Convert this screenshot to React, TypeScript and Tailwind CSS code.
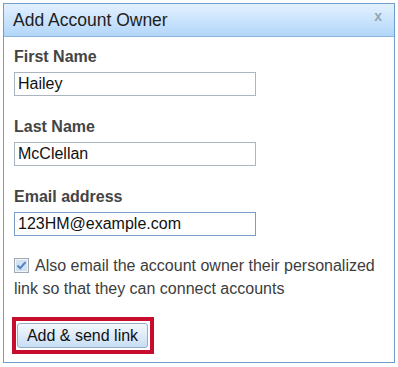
const font = { fontFamily: '"Liberation Sans", Arial, sans-serif' };

const Field = ({
	label,
	value,
	focused,
	first,
}: {
	label: string;
	value: string;
	focused?: boolean;
	first?: boolean;
}) => (
	<div className={first ? "" : "mt-[22px]"}>
		<p className="text-[16px] leading-[18px] font-bold text-[#444]">{label}</p>
		<div
			className={`mt-[6px] w-[242px] h-[24px] bg-white border flex items-center px-[3px] text-[16px] text-[#111] ${
				focused ? "border-[#7b9dc4]" : "border-[#abb5c2]"
			}`}
		>
			{value}
		</div>
	</div>
);

const CheckIcon = () => (
	<svg width="15" height="15" viewBox="0 0 15 15" className="inline-block align-[-2px] mr-[6px]">
		<rect x="0.5" y="0.5" width="14" height="14" fill="#f2f4f7" stroke="#a0a8b2" />
		<rect x="2" y="2" width="11" height="11" fill="#d3e2f2" />
		<path d="M3.5 7.5 L6.2 10.2 L11.5 4.2" fill="none" stroke="#4f86c0" strokeWidth="2" />
	</svg>
);

export default function App() {
	return (
		<div className="w-[398px] h-[367px] bg-white pt-[3px] pl-[3px] overflow-hidden" style={font}>
			<div className="w-[392px] h-[360px] border border-[#6f9dcc] bg-white flex flex-col">
				<div className="h-[33px] border-b border-[#8db5df] bg-gradient-to-b from-[#e3f1ff] to-[#b2d6f9] flex items-center justify-between pl-[9px] pr-[12px]">
					<span className="text-[17.5px] text-[#1e1e1e]">Add Account Owner</span>
					<span className="text-[14px] font-bold text-[#95a5b6] leading-none -mt-[8px]">x</span>
				</div>
				<div className="pt-[11px] px-[10px]">
					<Field label="First Name" value="Hailey" first />
					<Field label="Last Name" value="McClellan" />
					<Field label="Email address" value="123HM@example.com" focused />
					<p className="mt-[18px] text-[16px] leading-[23px] text-[#3d3d3d]">
						<CheckIcon />
						Also email the account owner their personalized link so that they can connect accounts
					</p>
					<div className="mt-[17px] -ml-[2px] inline-block border-4 border-[#c70d2e] pl-[1px] pr-[2px] py-[2px]">
						<button className="w-[131px] h-[25px] rounded-[3px] border border-[#97adc6] bg-gradient-to-b from-[#f3f8fd] to-[#c8def5] text-[16px] text-[#111] leading-none">
							Add &amp; send link
						</button>
					</div>
				</div>
			</div>
		</div>
	);
}
